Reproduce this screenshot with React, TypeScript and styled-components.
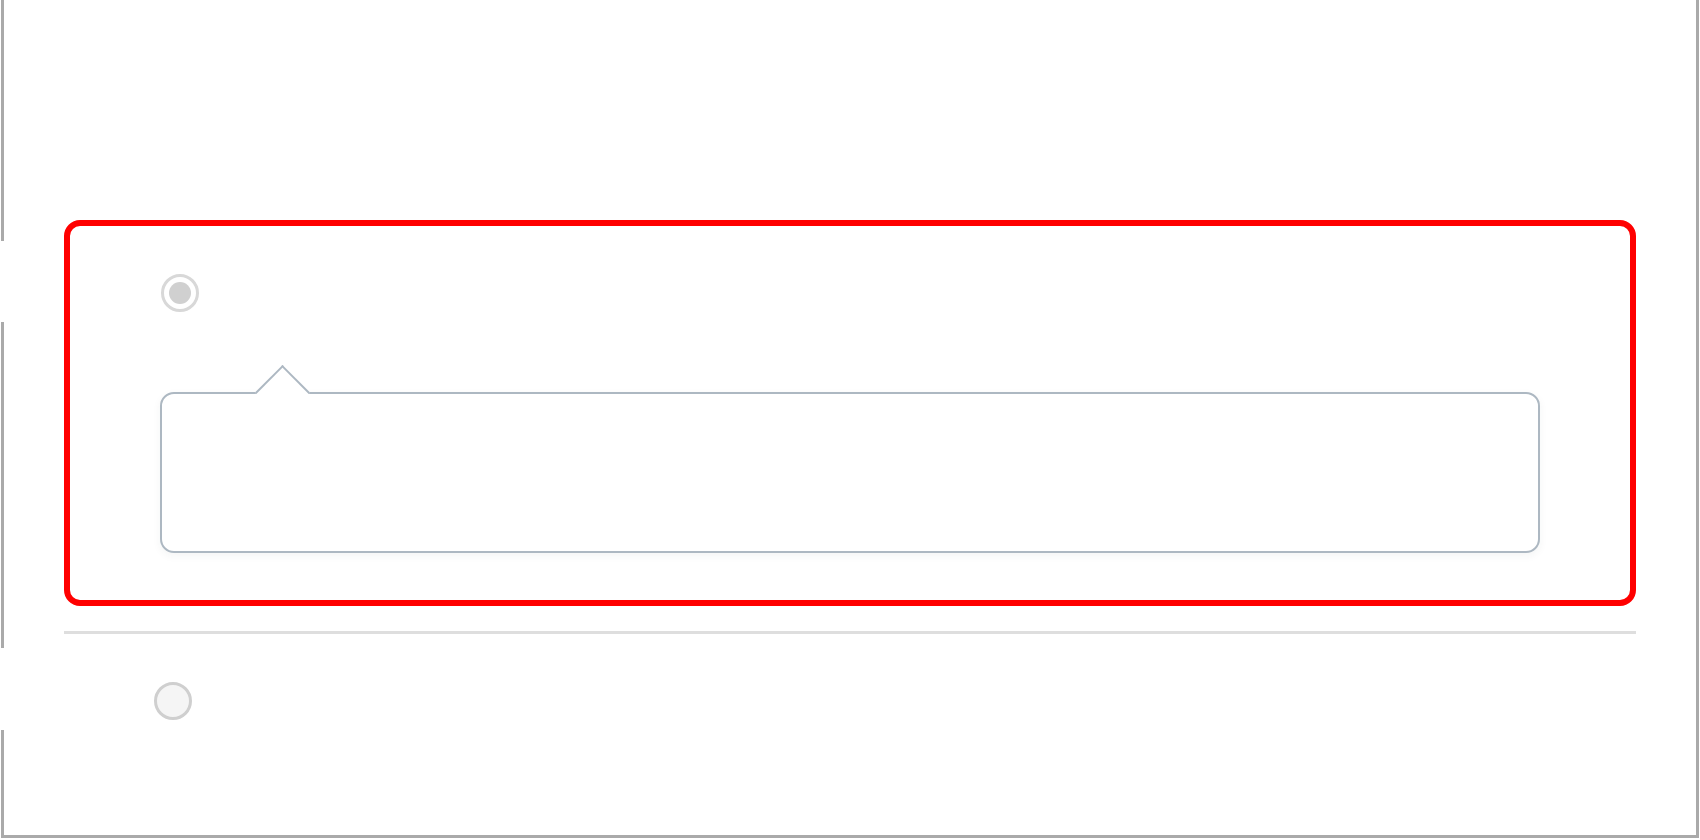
import styled, {createGlobalStyle} from "styled-components";

const GlobalStyle = createGlobalStyle`
  html, body {
    margin: 0;
    background: #ffffff;
    font-family: "Liberation Sans", Arial, sans-serif;
  }
`;

// outer frame: right and bottom borders, left border broken in three pieces
const Frame = styled.div`
  box-sizing: border-box;
  margin: 0 1px 1px;
  height: 838px;
  padding: 220px 60px 0 63px;
  border-right: 3px solid #aaaaaa;
  border-bottom: 3px solid #aaaaaa;
  background:
    linear-gradient(#aaaaaa, #aaaaaa) 0 0 / 3px 241px no-repeat,
    linear-gradient(#aaaaaa, #aaaaaa) 0 322px / 3px 326px no-repeat,
    linear-gradient(#aaaaaa, #aaaaaa) 0 730px / 3px 105px no-repeat;
`;

const Option = styled.div<{ $selected?: boolean }>`
  box-sizing: border-box;
  display: flex;
  flex-direction: column;
  border: 6px solid ${props => props.$selected ? "#ff0000" : "transparent"};
  border-radius: 16px;
  padding: ${props => props.$selected ? "48px 90px 47px 91px" : "42px 0 0 84px"};
`;

const Radio = styled.span<{ $checked?: boolean }>`
  box-sizing: border-box;
  display: flex;
  align-items: center;
  justify-content: center;
  width: 38px;
  height: 38px;
  border-radius: 50%;
  border: 3px solid ${props => props.$checked ? "#d8d8d8" : "#cfcfcf"};
  background: ${props => props.$checked ? "#ffffff" : "#f5f5f5"};

  &::after {
    content: "";
    display: ${props => props.$checked ? "block" : "none"};
    width: 22px;
    height: 22px;
    border-radius: 50%;
    background: #d0d0d0;
  }
`;

const Callout = styled.div`
  position: relative;
  box-sizing: border-box;
  margin: 80px 0 0 -1px;
  height: 161px;
  border: 2px solid #adb8c2;
  border-radius: 14px;
  background: #ffffff;
  box-shadow: 0 3px 8px rgba(40, 50, 60, 0.05);

  &::before {
    content: "";
    position: absolute;
    box-sizing: border-box;
    top: -21px;
    left: 101px;
    width: 39px;
    height: 39px;
    background: #ffffff;
    border-top: 2px solid #adb8c2;
    border-left: 2px solid #adb8c2;
    transform: rotate(45deg);
  }
`;

const Divider = styled.hr`
  margin: 25px 0 0;
  height: 3px;
  border: none;
  background: #dedede;
`;

const App = () => {
    return <>
        <GlobalStyle/>
        <Frame>
            <Option $selected>
                <Radio $checked/>
                <Callout/>
            </Option>
            <Divider/>
            <Option>
                <Radio/>
            </Option>
        </Frame>
    </>
};

export default App;
